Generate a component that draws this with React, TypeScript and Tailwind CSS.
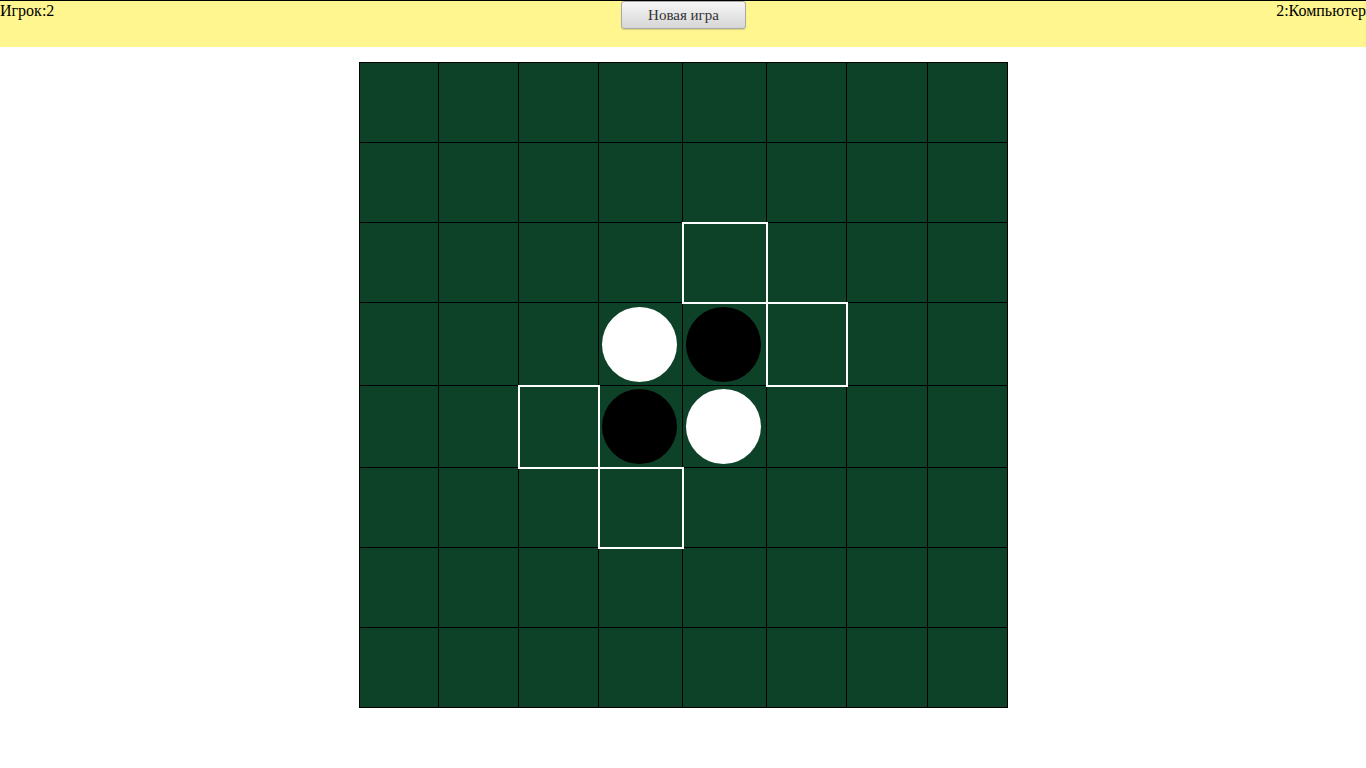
const whites = ["3-3", "4-4"];
const blacks = ["3-4", "4-3"];
const hints = ["2-4", "3-5", "4-2", "5-3"];

const colW = ["w-[78px]", "w-[79px]", "w-[79px]", "w-[83px]", "w-[83px]", "w-[79px]", "w-[80px]", "w-[79px]"];
const rowH = ["h-[79px]", "h-[79px]", "h-[79px]", "h-[82px]", "h-[81px]", "h-[79px]", "h-[79px]", "h-[79px]"];

function Cell({ r, c }: { r: number; c: number }) {
  const key = `${r}-${c}`;
  return (
    <div className={`relative flex items-center justify-center bg-[#0d4229] ${colW[c]} ${rowH[r]}`}>
      {whites.includes(key) && <div className="mr-[2px] h-[75px] w-[75px] rounded-full bg-white" />}
      {blacks.includes(key) && <div className="mr-[2px] h-[75px] w-[75px] rounded-full bg-black" />}
      {hints.includes(key) && (
        <div className="absolute -top-px -left-px -right-[2px] -bottom-[2px] z-10 border-2 border-white" />
      )}
    </div>
  );
}

export default function App() {
  return (
    <div className="min-h-screen bg-white font-['Liberation_Serif',serif] text-black">
      <header className="grid h-[47px] grid-cols-3 items-start border-t border-black bg-[#fff68f] text-[16px] leading-[18px]">
        <div className="pt-px">Игрок:2</div>
        <div className="flex justify-center pl-px">
          <button className="h-[28px] w-[125px] rounded-[3px] border border-[#a9a9a9] bg-gradient-to-b from-[#f6f6f6] to-[#d6d6d6] text-[15px] text-[#333] shadow-[0_1px_1px_rgba(0,0,0,0.15)]">
            Новая игра
          </button>
        </div>
        <div className="pt-px text-right">2:Компьютер</div>
      </header>

      <div className="mt-[15px] flex justify-center">
        <div className="flex flex-col gap-px border border-black bg-black">
          {Array.from({ length: 8 }).map((_, r) => (
            <div key={r} className="flex gap-px">
              {Array.from({ length: 8 }).map((_, c) => (
                <Cell key={c} r={r} c={c} />
              ))}
            </div>
          ))}
        </div>
      </div>
    </div>
  );
}
